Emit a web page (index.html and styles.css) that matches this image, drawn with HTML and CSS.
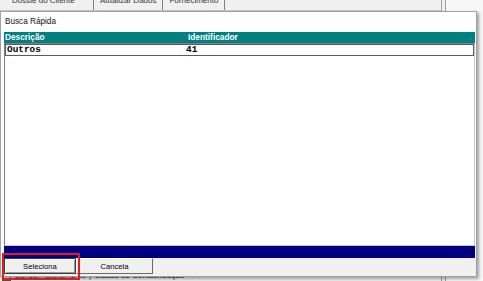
FILE: index.html
```html
<!DOCTYPE html>
<html>
<head>
<meta charset="utf-8">
<link rel="stylesheet" href="styles.css">
</head>
<body>
<div class="app">
  <div class="app-main">
    <div class="tabs">
      <div class="tab active"><span>Dossiê do Cliente</span></div>
      <div class="tab"><span>Atualizar Dados</span></div>
      <div class="tab"><span>Fornecimento</span></div>
    </div>
    <div class="app-body"></div>
    <div class="app-foot"><span class="chk"></span><span>Cancel. faturamento</span><span class="sep">|</span><span>Classe de Contabilização</span><span class="arrow">→</span></div>
  </div>
  <div class="app-side"></div>
  <div class="app-rest"></div>
</div>

<div class="dialog">
  <div class="client">
    <div class="title">Busca Rápida</div>
    <div class="grid-head"><span class="hcol1">Descrição</span><span class="hcol2">Identificador</span></div>
    <div class="list">
      <div class="row"><span class="rcol1">Outros</span><span class="rcol2">41</span></div>
    </div>
    <div class="status"></div>
  </div>
  <div class="buttons">
    <button class="btn default">Seleciona</button>
    <button class="btn cancel">Cancela</button>
  </div>
</div>

<div class="highlight"></div>
</body>
</html>
```

FILE: styles.css
```css
html, body {
  margin: 0;
  padding: 0;
}
body {
  width: 483px;
  height: 281px;
  overflow: hidden;
  position: relative;
  background: #f0f0f0;
  font-family: "Liberation Sans", Arial, sans-serif;
  color: #000;
}

/* background application */
.app {
  display: flex;
  height: 281px;
}
.app-main {
  width: 441px;
  display: flex;
  flex-direction: column;
}
.app-side {
  width: 3px;
  border-left: 1px solid #a0a0a0;
  border-right: 1px solid #a0a0a0;
}
.app-rest {
  flex: 1;
  background: #f7f7f7;
}
.tabs {
  display: flex;
  height: 10px;
  border-bottom: 1px solid #c8c8c8;
  overflow: hidden;
}
.tab {
  height: 10px;
  border-right: 1px solid #808080;
  font-size: 8px;
  line-height: 8px;
  padding: 0 6px;
  display: flex;
  align-items: flex-end;
  color: #333;
}
.tab span {
  margin-bottom: 5px;
}
.tab.active {
  width: 75px;
  padding-left: 12px;
}
.app-body {
  flex: 1;
}
.app-foot {
  height: 10px;
  font-size: 8px;
  line-height: 10px;
  display: flex;
  gap: 3px;
  padding-left: 2px;
  color: #222;
}
.chk {
  width: 7px;
  height: 7px;
  border: 1px solid #555;
  margin-top: 1px;
}
.arrow { margin-left: 6px; }

/* dialog window */
.dialog {
  position: absolute;
  left: 0;
  top: 11px;
  width: 475px;
  height: 264px;
  border: 1px solid #a0a0a0;
  background: #f0f0f0;
  box-shadow: 2px 2px 3px rgba(0, 0, 0, 0.35);
  display: flex;
  flex-direction: column;
}
.client {
  flex: 1;
  background: #fff;
  padding: 0 1px 0 3px;
  display: flex;
  flex-direction: column;
}
.title {
  height: 20px;
  font-size: 8.2px;
  line-height: 19px;
  padding-left: 1px;
  color: #111;
}
.grid-head {
  height: 11px;
  background: #008080;
  color: #fff;
  font-weight: bold;
  font-size: 8.3px;
  line-height: 11px;
  display: flex;
}
.hcol1 {
  width: 183px;
  padding-left: 1px;
}
.list {
  flex: 1;
  border: 1px solid;
  border-color: #808080 #c8c8c8 #c8c8c8 #808080;
  background: #fff;
}
.row {
  height: 10px;
  border: 1px solid #5a5a5a;
  display: flex;
  font-family: "Liberation Mono", "Courier New", monospace;
  font-weight: bold;
  font-size: 9.4px;
  line-height: 10px;
}
.rcol1 {
  width: 179px;
  padding-left: 1px;
}
.status {
  height: 12px;
  background: #000080;
}
.buttons {
  height: 18px;
  display: flex;
  align-items: flex-start;
  padding-left: 3px;
}
.btn {
  margin: 0;
  height: 16px;
  padding: 0;
  font-family: "Liberation Sans", Arial, sans-serif;
  font-size: 7.7px;
  color: #000;
  background: #f0f0f0;
  border: 1px solid;
  border-color: #fff #696969 #696969 #fff;
  box-sizing: border-box;
}
.btn.default {
  width: 72px;
  border: 1px solid #3c3c3c;
  box-shadow: inset 1px 1px 0 #fff, inset -1px -1px 0 #9a9a9a;
}
.btn.cancel {
  width: 77px;
}

/* red annotation */
.highlight {
  position: absolute;
  left: 2px;
  top: 253px;
  width: 78px;
  height: 27px;
  border: 2px solid #e41b1b;
  box-sizing: border-box;
}
```
